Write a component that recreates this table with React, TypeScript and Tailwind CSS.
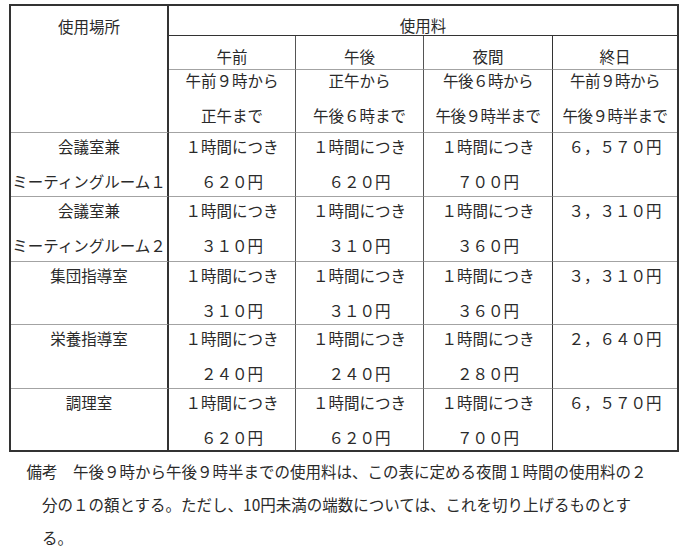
import React from 'react';

const rows = [
  { name: ['会議室兼', 'ミーティングルーム１'], am: '６２０円', pm: '６２０円', night: '７００円', day: '６，５７０円' },
  { name: ['会議室兼', 'ミーティングルーム２'], am: '３１０円', pm: '３１０円', night: '３６０円', day: '３，３１０円' },
  { name: ['集団指導室'], am: '３１０円', pm: '３１０円', night: '３６０円', day: '３，３１０円' },
  { name: ['栄養指導室'], am: '２４０円', pm: '２４０円', night: '２８０円', day: '２，６４０円' },
  { name: ['調理室'], am: '６２０円', pm: '６２０円', night: '７００円', day: '６，５７０円' },
];

// right border per column (last column has none, the frame closes it)
const colBorder = [
  'border-r-2 border-r-[#333]',
  'border-r border-r-[#555]',
  'border-r border-r-[#555]',
  'border-r border-r-[#333]',
  '',
];

const Cell: React.FC<{ col: number; items: string[]; pad?: string; extra?: string }> = ({
  col,
  items,
  pad = 'pt-[3px]',
  extra = '',
}) => (
  <div
    className={`${colBorder[col]} border-t border-t-[#a3a3a3] ${pad} ${extra} flex flex-col gap-[15px] items-center whitespace-nowrap`}
  >
    {items.map((t, i) => (
      <div key={i}>{t}</div>
    ))}
  </div>
);

const App: React.FC = () => {
  return (
    <div
      className="w-[690px] h-[550px] bg-white text-[#2a2a2a] text-[15.5px] leading-[20px] overflow-hidden pt-[4px]"
      style={{ fontFamily: '"Noto Sans CJK JP", "Noto Sans", sans-serif' }}
    >
      {/* 使用料の表 */}
      <div className="ml-[9px] w-[670px] border-2 border-[#333] grid grid-cols-[158px_127px_128px_129px_124px] grid-rows-[30px_33px_63px_64px_65px_63px_64px_62px] text-center">
        <div className="row-span-3 pt-[10px] border-r-2 border-r-[#333]">使用場所</div>
        <div className="col-span-4 pt-[9px] border-b border-b-[#333]">使用料</div>

        {['午前', '午後', '夜間', '終日'].map((t, i) => (
          <div key={t} className={`pt-[10px] ${colBorder[i + 1]}`}>
            {t}
          </div>
        ))}

        <Cell col={1} pad="pt-0" items={['午前９時から', '正午まで']} />
        <Cell col={2} pad="pt-0" items={['正午から', '午後６時まで']} />
        <Cell col={3} pad="pt-0" extra="tracking-[-0.5px]" items={['午後６時から', '午後９時半まで']} />
        <Cell col={4} pad="pt-0" extra="tracking-[-0.5px]" items={['午前９時から', '午後９時半まで']} />

        {rows.map((r, i) => (
          <React.Fragment key={i}>
            <Cell col={0} items={r.name} />
            <Cell col={1} items={['１時間につき', r.am]} />
            <Cell col={2} items={['１時間につき', r.pm]} />
            <Cell col={3} items={['１時間につき', r.night]} />
            <Cell col={4} items={[r.day]} />
          </React.Fragment>
        ))}
      </div>

      {/* 備考 */}
      <div className="mt-[3px] pl-[42px] -indent-[15.5px] leading-[33px] whitespace-nowrap">
        備考　午後９時から午後９時半までの使用料は、この表に定める夜間１時間の使用料の２
        <br />
        分の１の額とする。ただし、10円未満の端数については、これを切り上げるものとす
        <br />
        る。
      </div>
    </div>
  );
};

export default App;
